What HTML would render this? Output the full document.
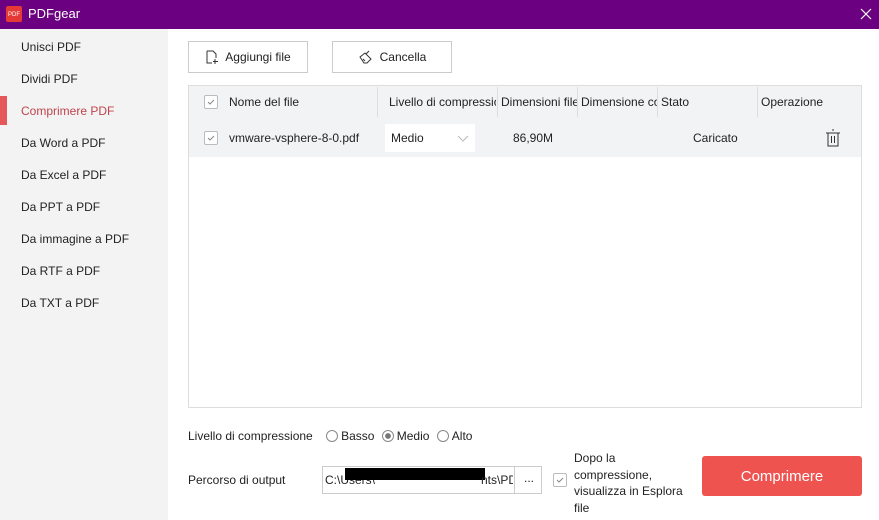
<!DOCTYPE html><html><head><style>
*{box-sizing:border-box;margin:0;padding:0}
body{width:879px;height:520px;overflow:hidden;font-family:"Segoe UI","Liberation Sans",sans-serif;font-size:12px;color:#222;background:#fff;position:relative}
.a{position:absolute}
.tb{left:0;top:0;width:879px;height:29px;background:#6b0080;color:#fff}
.sb{left:0;top:29px;width:168px;height:491px;background:#f3f3f3}
.sb div{position:absolute;left:21px;font-size:12px;color:#222}
.btn{border:1px solid #ccc;background:#fff;height:32px;top:41px;display:flex;align-items:center;justify-content:center;gap:6px}
.cb{width:14px;height:14px;border:1px solid #bbb;border-radius:2px;background:#fff;display:flex;align-items:center;justify-content:center}
.sep{width:1px;background:#ddd;top:87px;height:30px}
.rad{width:12px;height:12px;border:1px solid #888;border-radius:50%;display:inline-block;vertical-align:-2px;margin-right:3px}
</style></head><body>
<div class="a tb"><svg class="a" style="left:6px;top:6px" width="16" height="16"><rect width="16" height="16" rx="2" fill="#e53935"/><text x="2" y="10" font-size="6" fill="#fff" font-family="Liberation Sans">PDF</text></svg><span class="a" style="left:28px;top:6px;font-size:13px">PDFgear</span><svg class="a" style="left:860px;top:8px" width="12" height="12" stroke="#fff" stroke-width="1.2"><path d="M1 1l10 10M11 1L1 11"/></svg></div>
<div class="a sb">
<div style="top:11px">Unisci PDF</div><div style="top:43px">Dividi PDF</div>
<div style="top:75px;color:#c0444c">Comprimere PDF</div><div style="top:107px">Da Word a PDF</div>
<div style="top:139px">Da Excel a PDF</div><div style="top:171px">Da PPT a PDF</div>
<div style="top:203px">Da immagine a PDF</div><div style="top:235px">Da RTF a PDF</div><div style="top:267px">Da TXT a PDF</div>
</div>
<div class="a" style="left:0;top:96px;width:7px;height:29px;background:#e5585a"></div>
<div class="a btn" style="left:188px;width:120px"><svg width="14" height="14" fill="none" stroke="#333"><path d="M2 1h6l3 3v4M2 1v12h5M10 9v5M8 11.5h5"/></svg>Aggiungi file</div>
<div class="a btn" style="left:332px;width:120px"><svg width="16" height="14" fill="none" stroke="#333"><path d="M2 7l5-4 6 6-4 4H6zM8 4l3-3M5 9l2 2"/></svg>Cancella</div>
<div class="a" style="left:188px;top:85px;width:674px;height:323px;border:1px solid #ddd;background:#fff"></div>
<div class="a" style="left:189px;top:86px;width:672px;height:33px;background:#f2f3f5"></div>
<div class="a" style="left:189px;top:119px;width:672px;height:38px;background:#f2f3f5"></div>
<div class="a sep" style="left:377px"></div><div class="a sep" style="left:497px"></div><div class="a sep" style="left:577px"></div><div class="a sep" style="left:657px"></div><div class="a sep" style="left:757px"></div>
<div class="a cb" style="left:204px;top:95px"><svg width="10" height="10" fill="none" stroke="#888"><path d="M2 5l2 2 4-4"/></svg></div>
<div class="a" style="left:229px;top:95px">Nome del file</div>
<div class="a" style="left:389px;top:95px;width:107px;overflow:hidden;white-space:nowrap">Livello di compressione</div>
<div class="a" style="left:501px;top:95px;width:76px;overflow:hidden;white-space:nowrap">Dimensioni file</div>
<div class="a" style="left:581px;top:95px;width:76px;overflow:hidden;white-space:nowrap">Dimensione compressa</div>
<div class="a" style="left:661px;top:95px">Stato</div>
<div class="a" style="left:761px;top:95px">Operazione</div>
<div class="a cb" style="left:204px;top:131px"><svg width="10" height="10" fill="none" stroke="#888"><path d="M2 5l2 2 4-4"/></svg></div>
<div class="a" style="left:229px;top:131px">vmware-vsphere-8-0.pdf</div>
<div class="a" style="left:385px;top:124px;width:90px;height:28px;background:#fff"><span class="a" style="left:6px;top:7px">Medio</span><svg class="a" style="left:72px;top:11px" width="12" height="7" fill="none" stroke="#bbb"><path d="M1 1l5 5 5-5"/></svg></div>
<div class="a" style="left:513px;top:131px">86,90M</div>
<div class="a" style="left:693px;top:131px">Caricato</div>
<svg class="a" style="left:825px;top:129px" width="16" height="18" fill="none" stroke="#333"><path d="M1 4h14M7 1h2M3 4v13h10V4M6.5 7v7M9.5 7v7"/></svg>
<div class="a" style="left:188px;top:429px">Livello di compressione <span style="margin-left:10px"><span class="rad"></span>Basso <span class="rad" style="margin-left:4px;background:radial-gradient(#777 35%,#fff 45%)"></span>Medio <span class="rad" style="margin-left:4px"></span>Alto</span></div>
<div class="a" style="left:188px;top:473px">Percorso di output</div>
<div class="a" style="left:322px;top:466px;width:220px;height:28px;border:1px solid #ccc;overflow:hidden"><span class="a" style="left:2px;top:6px">C:\Users\</span><div class="a" style="left:22px;top:1px;width:140px;height:12px;background:#000"></div><div class="a" style="left:22px;top:6px;width:140px;height:6px;background:#000"></div><span class="a" style="left:158px;top:6px;width:32px;overflow:hidden;white-space:nowrap">nts\PDF</span><div class="a" style="left:191px;top:0;width:1px;height:26px;background:#ccc"></div><span class="a" style="left:201px;top:4px">...</span></div>
<div class="a cb" style="left:553px;top:473px"><svg width="10" height="10" fill="none" stroke="#888"><path d="M2 5l2 2 4-4"/></svg></div>
<div class="a" style="left:574px;top:450px;line-height:16.5px">Dopo la<br>compressione,<br>visualizza in Esplora<br>file</div>
<div class="a" style="left:702px;top:456px;width:160px;height:40px;background:#ef5350;border-radius:3px;color:#fff;font-size:15px;display:flex;align-items:center;justify-content:center">Comprimere</div>
</body></html>
